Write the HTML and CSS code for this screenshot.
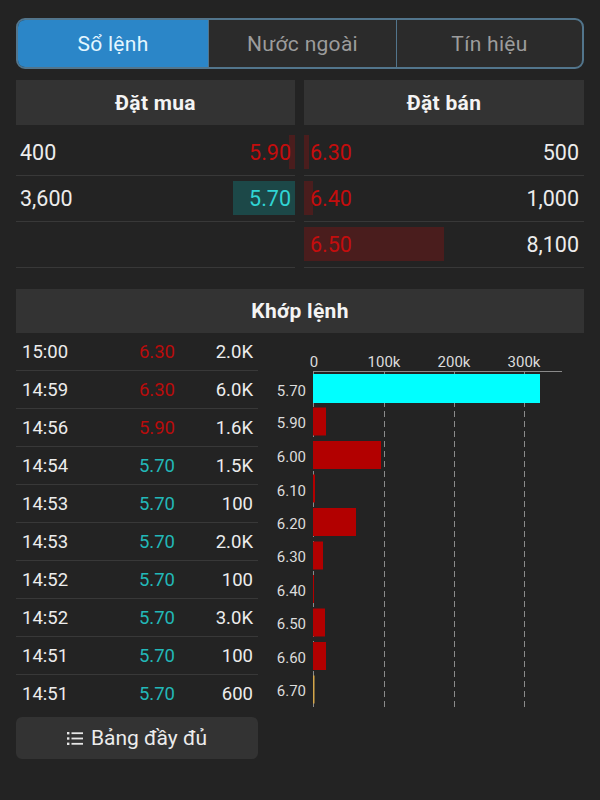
FILE: index.html
```html
<!DOCTYPE html>
<html lang="vi">
<head>
  <meta charset="UTF-8" />
  <meta name="viewport" content="width=device-width, initial-scale=1.0"/>
  <title>Sổ lệnh</title>
  <link rel="stylesheet" href="styles.css">
</head>
<body>

  <main class="app">
    <!-- Tabs -->
    <nav class="tabs">
      <div class="tab active">Sổ lệnh</div>
      <div class="tab">Nước ngoài</div>
      <div class="tab">Tín hiệu</div>
    </nav>

    <!-- Bước giá -->
    <section class="book">
      <div class="side">
        <div class="head">Đặt mua</div>
        <div class="rows">
          <div class="row">
            <span class="bar buy-bar red-bg" style="width:6px"></span>
            <span class="vol">400</span><span class="price down">5.90</span>
          </div>
          <div class="row">
            <span class="bar buy-bar teal-bg" style="width:62px"></span>
            <span class="vol">3,600</span><span class="price up">5.70</span>
          </div>
          <div class="row"></div>
        </div>
      </div>
      <div class="side">
        <div class="head">Đặt bán</div>
        <div class="rows">
          <div class="row sell">
            <span class="bar sell-bar red-bg" style="width:5px"></span>
            <span class="price down">6.30</span><span class="vol">500</span>
          </div>
          <div class="row sell">
            <span class="bar sell-bar red-bg" style="width:9px"></span>
            <span class="price down">6.40</span><span class="vol">1,000</span>
          </div>
          <div class="row sell">
            <span class="bar sell-bar red-bg" style="width:140px"></span>
            <span class="price down">6.50</span><span class="vol">8,100</span>
          </div>
        </div>
      </div>
    </section>

    <!-- Khớp lệnh -->
    <section class="match">
      <div class="head">Khớp lệnh</div>
      <div class="match-body">
        <div class="match-left">
          <div class="trades">
            <div class="trade"><span class="t">15:00</span><span class="p down">6.30</span><span class="v">2.0K</span></div>
            <div class="trade"><span class="t">14:59</span><span class="p down">6.30</span><span class="v">6.0K</span></div>
            <div class="trade"><span class="t">14:56</span><span class="p down">5.90</span><span class="v">1.6K</span></div>
            <div class="trade"><span class="t">14:54</span><span class="p up">5.70</span><span class="v">1.5K</span></div>
            <div class="trade"><span class="t">14:53</span><span class="p up">5.70</span><span class="v">100</span></div>
            <div class="trade"><span class="t">14:53</span><span class="p up">5.70</span><span class="v">2.0K</span></div>
            <div class="trade"><span class="t">14:52</span><span class="p up">5.70</span><span class="v">100</span></div>
            <div class="trade"><span class="t">14:52</span><span class="p up">5.70</span><span class="v">3.0K</span></div>
            <div class="trade"><span class="t">14:51</span><span class="p up">5.70</span><span class="v">100</span></div>
            <div class="trade"><span class="t">14:51</span><span class="p up">5.70</span><span class="v">600</span></div>
          </div>
          <button class="full-btn">
            <svg width="16" height="15" viewBox="0 0 16 15">
              <rect x="0" y="1" width="2.4" height="2.4" fill="#e6e6e6"/>
              <rect x="0" y="6.3" width="2.4" height="2.4" fill="#e6e6e6"/>
              <rect x="0" y="11.6" width="2.4" height="2.4" fill="#e6e6e6"/>
              <rect x="4.5" y="1.3" width="11.5" height="1.8" fill="#e6e6e6"/>
              <rect x="4.5" y="6.6" width="11.5" height="1.8" fill="#e6e6e6"/>
              <rect x="4.5" y="11.9" width="11.5" height="1.8" fill="#e6e6e6"/>
            </svg>
            Bảng đầy đủ
          </button>
        </div>

        <!-- Biểu đồ khối lượng theo giá -->
        <div class="chart">
          <svg width="314" height="380" viewBox="0 0 314 380">
            <g class="axis-label" text-anchor="middle">
              <text x="44" y="34">0</text>
              <text x="114" y="34">100k</text>
              <text x="184" y="34">200k</text>
              <text x="254" y="34">300k</text>
            </g>
            <g class="grid">
              <line x1="43.5" y1="38" x2="43.5" y2="374"/>
              <line x1="114.5" y1="38" x2="114.5" y2="374"/>
              <line x1="184.5" y1="38" x2="184.5" y2="374"/>
              <line x1="254.5" y1="38" x2="254.5" y2="374"/>
            </g>
            <line class="axis" x1="43" y1="38.5" x2="292" y2="38.5"/>
            <rect x="43" y="41" width="227" height="29" fill="#00ffff"/>
            <rect x="43" y="74.5" width="13" height="28" fill="#b20000"/>
            <rect x="43" y="108" width="68" height="28" fill="#b20000"/>
            <rect x="43" y="141.5" width="2" height="28" fill="#b20000"/>
            <rect x="43" y="175" width="43" height="28" fill="#b20000"/>
            <rect x="43" y="208.5" width="10" height="28" fill="#b20000"/>
            <rect x="43" y="242" width="1" height="28" fill="#b20000"/>
            <rect x="43" y="275.5" width="12" height="28" fill="#b20000"/>
            <rect x="43" y="309" width="13" height="28" fill="#b20000"/>
            <rect x="43" y="342.5" width="1.5" height="28" fill="#d4a64a"/>
            <g class="price-label" text-anchor="end">
              <text x="36" y="63">5.70</text>
              <text x="36" y="95">5.90</text>
              <text x="36" y="129">6.00</text>
              <text x="36" y="163">6.10</text>
              <text x="36" y="196">6.20</text>
              <text x="36" y="229">6.30</text>
              <text x="36" y="263">6.40</text>
              <text x="36" y="296">6.50</text>
              <text x="36" y="330">6.60</text>
              <text x="36" y="363">6.70</text>
            </g>
          </svg>
        </div>
      </div>
    </section>
  </main>

</body>
</html>
```

FILE: styles.css
```css
:root {
  --bg: #232323;
  --head-bg: #333333;
  --line: #383838;
  --text: #ececec;
  --red: #c40d0d;
  --teal: #30d4d4;
  --blue: #2b86c8;
}

* {
  box-sizing: border-box;
}

body {
  margin: 0;
  background: var(--bg);
  color: var(--text);
  font-family: Roboto, 'Noto Sans', sans-serif;
}

.app {
  padding: 18px 16px 0;
}

/* Tabs */
.tabs {
  display: grid;
  grid-template-columns: 190px 188px 1fr;
  height: 51px;
  border: 2px solid #52758c;
  border-radius: 9px;
  overflow: hidden;
  background: #2b2b2b;
}

.tab {
  display: flex;
  align-items: center;
  justify-content: center;
  font-size: 21px;
  letter-spacing: 0.3px;
  color: #9c9c9c;
  border-left: 1px solid #52758c;
}

.tab:first-child {
  border-left: none;
}

.tab.active {
  background: var(--blue);
  color: #e4f6ff;
}

/* Order book */
.book {
  display: grid;
  grid-template-columns: 279px 1fr;
  gap: 9px;
  margin-top: 11px;
}

.head {
  height: 45px;
  display: flex;
  align-items: center;
  justify-content: center;
  background: var(--head-bg);
  font-weight: bold;
  font-size: 21px;
  letter-spacing: 0.3px;
  color: #f4f4f4;
}

.rows {
  padding-top: 5px;
}

.row {
  position: relative;
  height: 46px;
  display: flex;
  align-items: center;
  justify-content: space-between;
  padding: 0 4px;
  border-bottom: 1px solid var(--line);
  font-size: 21.5px;
}

.row.sell {
  padding: 0 5px 0 6px;
}

.row span {
  position: relative;
}

.bar {
  position: absolute !important;
  top: 5px;
  bottom: 6px;
}

.buy-bar {
  right: 0;
}

.sell-bar {
  left: 0;
}

.red-bg {
  background: #4a1d1d;
}

.teal-bg {
  background: #1c4848;
}

.price.down {
  color: var(--red);
}

.price.up {
  color: var(--teal);
}

/* Matched trades */
.match {
  margin-top: 21px;
}

.match .head {
  height: 44px;
}

.match-body {
  display: flex;
  gap: 12px;
}

.match-left {
  width: 242px;
}

.trade {
  display: grid;
  grid-template-columns: 1fr 80px 78px;
  align-items: center;
  height: 38px;
  padding: 0 5px 0 6px;
  border-bottom: 1px solid var(--line);
  font-size: 18.5px;
}

.trade:last-child {
  border-bottom: none;
}

.trade .p,
.trade .v {
  text-align: right;
}

.trade .p.down {
  color: #b80c0c;
}

.trade .p.up {
  color: #22b8b8;
}

.full-btn {
  width: 100%;
  height: 42px;
  margin-top: 4px;
  display: flex;
  align-items: center;
  justify-content: center;
  gap: 8px;
  background: var(--head-bg);
  color: #ececec;
  border: none;
  border-radius: 6px;
  font-family: inherit;
  font-size: 21px;
}

.chart svg {
  display: block;
}

.axis-label text,
.price-label text {
  font-family: Roboto, sans-serif;
  font-size: 15px;
  fill: #dcdcdc;
}

.grid line {
  stroke: #8a8a8a;
  stroke-width: 1;
  stroke-dasharray: 6 4;
}

.axis {
  stroke: #8a8a8a;
  stroke-width: 1;
}
```
